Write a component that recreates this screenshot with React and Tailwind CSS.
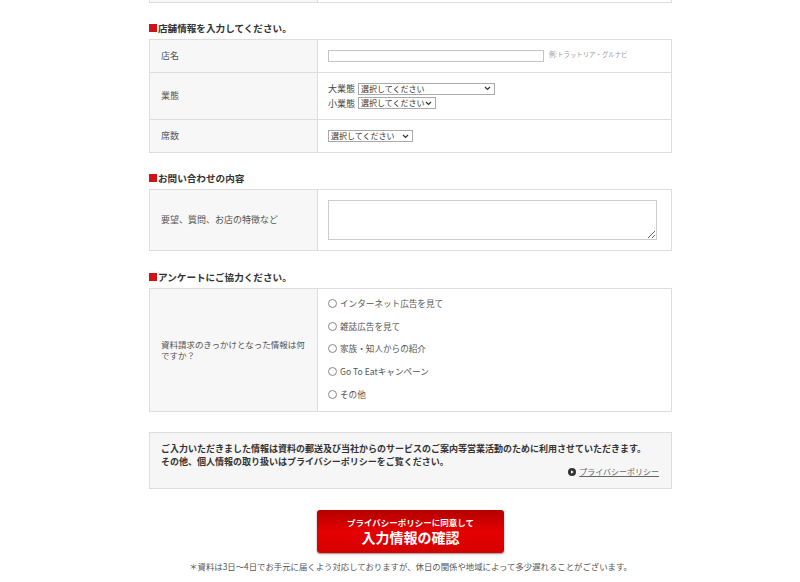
import React from "react";

function Heading({ children, className = "" }) {
  return (
    <div className={"flex items-center h-[14px] mb-[4px] text-[9.6px] font-bold text-[#333] " + className}>
      <span className="inline-block w-[8px] h-[8px] bg-[#d0121b] mr-[1px]"></span>
      <span>{children}</span>
    </div>
  );
}

function Chevron() {
  return (
    <svg width="7" height="5" viewBox="0 0 7 5" className="shrink-0">
      <path d="M1 1 L3.5 3.5 L6 1" fill="none" stroke="#333" strokeWidth="1.2" />
    </svg>
  );
}

function Select({ w }) {
  return (
    <div className={"flex items-center justify-between h-[12px] border border-[#aaa] bg-white pl-[2px] pr-[3px] text-[8px] leading-none text-[#333] " + w}>
      <span className="whitespace-nowrap">選択してください</span>
      <Chevron />
    </div>
  );
}

function Label({ children }) {
  return (
    <div className="w-[168px] shrink-0 bg-[#f7f7f7] border-r border-[#ddd] flex items-center pl-[11px] text-[9px] text-[#555] whitespace-nowrap">
      {children}
    </div>
  );
}

function Radio({ children }) {
  return (
    <div className="flex items-center h-[22.75px] text-[8.6px] text-[#555]">
      <span className="inline-block w-[9px] h-[9px] rounded-full border border-[#888] bg-white mr-[3px]"></span>
      <span>{children}</span>
    </div>
  );
}

export default function App() {
  return (
    <div className="min-h-[582px] bg-white font-['Noto_Sans_CJK_JP','Noto_Sans',sans-serif] text-[#333]">
      <div className="ml-[149px] w-[523px]">
        {/* previous table stub */}
        <div className="flex h-[3px] border-x border-b border-[#ddd]">
          <div className="w-[168px] bg-[#f7f7f7] border-r border-[#ddd]"></div>
        </div>

        <Heading className="mt-[18px]">店舗情報を入力してください。</Heading>
        <div className="border-x border-t border-[#ddd]">
          <div className="flex h-[33px] border-b border-[#ddd]">
            <Label>店名</Label>
            <div className="flex items-center pl-[10px]">
              <div className="w-[216px] h-[12px] border border-[#c4c4c4] bg-white"></div>
              <span className="ml-[5px] -mt-[3px] text-[6.4px] text-[#999] whitespace-nowrap">例:トラットリア・グルナビ</span>
            </div>
          </div>
          <div className="flex h-[47px] border-b border-[#ddd]">
            <Label>業態</Label>
            <div className="flex flex-col justify-center pl-[10px] gap-[1px]">
              <div className="flex items-center text-[9px] text-[#444]">
                <span className="w-[30px]">大業態</span>
                <Select w="w-[137px]" />
              </div>
              <div className="flex items-center text-[9px] text-[#444]">
                <span className="w-[30px]">小業態</span>
                <Select w="w-[78px]" />
              </div>
            </div>
          </div>
          <div className="flex h-[33px] border-b border-[#ddd]">
            <Label>席数</Label>
            <div className="flex items-center pl-[10px]">
              <Select w="w-[85px]" />
            </div>
          </div>
        </div>

        <Heading className="mt-[18px]">お問い合わせの内容</Heading>
        <div className="border border-[#ddd]">
          <div className="flex h-[60px]">
            <Label>要望、質問、お店の特徴など</Label>
            <div className="flex items-center pl-[10px]">
              <textarea className="block w-[329px] h-[40px] border border-[#ccc] bg-white outline-none" />
            </div>
          </div>
        </div>

        <Heading className="mt-[19px]">アンケートにご協力ください。</Heading>
        <div className="border border-[#ddd]">
          <div className="flex h-[122px]">
            <div className="w-[168px] shrink-0 bg-[#f7f7f7] border-r border-[#ddd] flex flex-col justify-center pl-[11px] text-[8.5px] leading-[11px] text-[#555] whitespace-nowrap">
              <div>資料請求のきっかけとなった情報は何</div>
              <div>ですか？</div>
            </div>
            <div className="flex flex-col pl-[10px] pt-[3px]">
              <Radio>インターネット広告を見て</Radio>
              <Radio>雑誌広告を見て</Radio>
              <Radio>家族・知人からの紹介</Radio>
              <Radio>Go To Eatキャンペーン</Radio>
              <Radio>その他</Radio>
            </div>
          </div>
        </div>

        <div className="mt-[20px] h-[57px] border border-[#ddd] bg-[#f6f6f6] pl-[11px] pr-[12px] pt-[9px]">
          <div className="text-[9px] font-bold leading-[13px] text-[#333] whitespace-nowrap">
            ご入力いただきました情報は資料の郵送及び当社からのサービスのご案内等営業活動のために利用させていただきます。<br />
            その他、個人情報の取り扱いはプライバシーポリシーをご覧ください。
          </div>
          <div className="flex justify-end items-center -mt-[1px] leading-[10px]">
            <svg width="8" height="8" viewBox="0 0 8 8" className="mr-[3px]">
              <circle cx="4" cy="4" r="4" fill="#333" />
              <path d="M3 2.2 L5.8 4 L3 5.8 Z" fill="#fff" />
            </svg>
            <span className="text-[8px] text-[#666] underline">プライバシーポリシー</span>
          </div>
        </div>

        <div className="flex justify-center mt-[21px]">
          <div className="w-[187px] h-[43px] rounded-[3px] bg-linear-to-b from-[#b30000] via-[#e60000] to-[#d40000] shadow-[0_1px_2px_rgba(0,0,0,0.45)] flex flex-col items-center pt-[7px] text-white font-bold">
            <div className="text-[8.5px] leading-[10px]">プライバシーポリシーに同意して</div>
            <div className="text-[14px] leading-[18px] mt-[1px]">入力情報の確認</div>
          </div>
        </div>

        <div className="mt-[8px] text-center text-[8.4px] leading-[10px] text-[#555] whitespace-nowrap">
          ＊資料は3日〜4日でお手元に届くよう対応しておりますが、休日の関係や地域によって多少遅れることがございます。
        </div>
      </div>
    </div>
  );
}
